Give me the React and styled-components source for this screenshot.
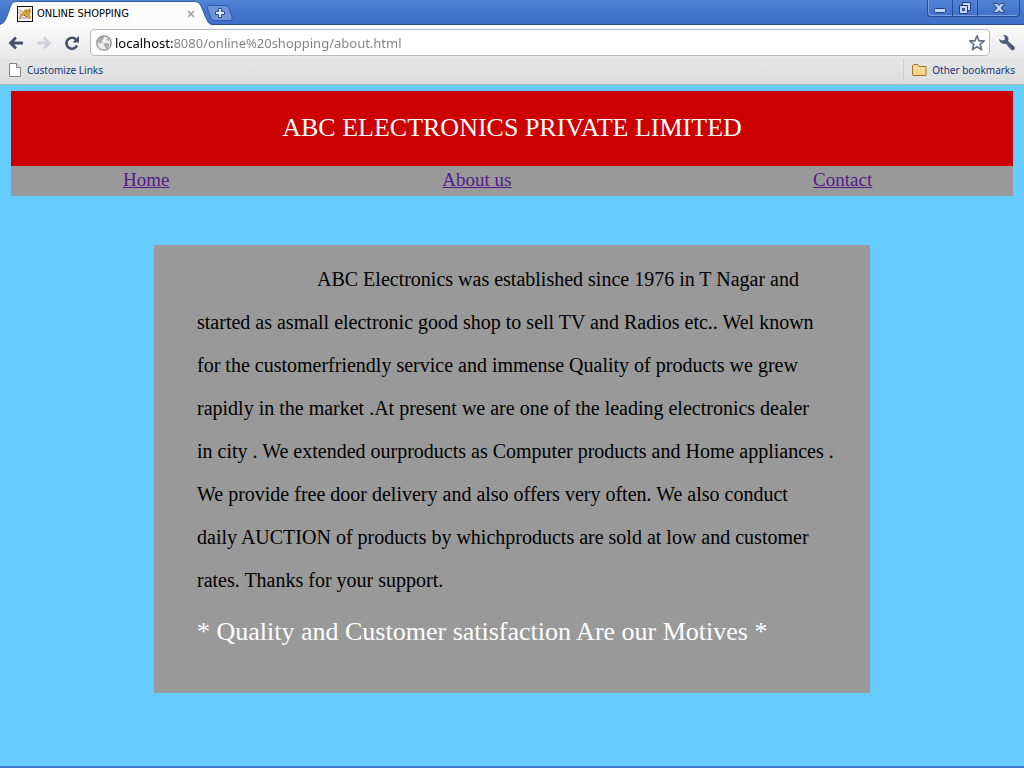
import React from "react";
import styled, { createGlobalStyle } from "styled-components";

const GlobalStyle = createGlobalStyle`
  * { box-sizing: border-box; }
  body { margin: 0; background: #66ccff; }
`;

const ui = `"DejaVu Sans Condensed", "DejaVu Sans", sans-serif`;
const uiText = `"Noto Sans", sans-serif`;

const Window = styled.div`
  min-height: 100vh;
  display: flex;
  flex-direction: column;
  border-bottom: 2px solid #3c78cc;
  background: #66ccff;
`;

const TitleBar = styled.div`
  height: 25px;
  display: flex;
  align-items: stretch;
  background: linear-gradient(#5083d3, #4373cb 60%, #406fc9);
  border-bottom: 1px solid #2e4b8e;
`;

const Tab = styled.div`
  position: relative;
  width: 212px;
  height: 25px;
  padding: 2px 15px 0 17px;
  display: flex;
  align-items: center;
  gap: 4px;
  font: 11px/16px ${ui};
  color: #000;
`;

const TabShape = styled.svg`
  position: absolute;
  left: 0;
  top: 0;
`;

const Favicon = styled.svg`
  position: relative;
  flex: none;
`;

const TabTitle = styled.span`
  position: relative;
  flex: 1;
  white-space: nowrap;
`;

const IconButton = styled.button`
  position: relative;
  flex: none;
  display: flex;
  align-items: center;
  justify-content: center;
  width: ${(p) => p.$w || 28}px;
  height: ${(p) => p.$h || 24}px;
  padding: 0;
  border: 0;
  background: none;
`;

const NewTabShape = styled.svg`
  flex: none;
`;

const Controls = styled.div`
  display: flex;
  height: 17px;
  margin-left: auto;
  margin-right: 4px;
  border: 1px solid #284b93;
  border-top: 0;
  border-radius: 0 0 4px 4px;
  box-shadow: inset 1px -1px 0 #7ba0df;
`;

const ControlButton = styled(IconButton)`
  height: 16px;
  border-left: ${(p) => (p.$divided ? "1px solid #284b93" : "0")};
`;

const Toolbar = styled.div`
  display: flex;
  align-items: center;
  height: 33px;
  padding: 2px 3px 0 2px;
  background: linear-gradient(#fbfafb, #e9e9e9);
`;

const AddressBar = styled.label`
  flex: 1;
  min-width: 0;
  height: 27px;
  margin: 0 3px 0 4px;
  padding: 0 2px 0 5px;
  display: flex;
  align-items: center;
  gap: 3px;
  background: #fff;
  border: 1px solid #b9babd;
  border-radius: 4px;
`;

const AddressInput = styled.input`
  flex: 1;
  min-width: 0;
  padding: 0;
  border: 0;
  outline: 0;
  font: 13px/20px ${uiText};
  color: transparent;
  background: linear-gradient(90deg, #000 58px, #808080 58px);
  background-clip: text;
  -webkit-background-clip: text;
`;

const BookmarksBar = styled.nav`
  display: flex;
  align-items: center;
  justify-content: space-between;
  height: 27px;
  padding: 0 9px 2px 8px;
  background: linear-gradient(#e6e6e6, #dcdcdc);
  border-bottom: 1px solid #b4b5b9;
`;

const Bookmark = styled.a`
  display: flex;
  align-items: center;
  height: 22px;
  gap: 5px;
  padding-left: ${(p) => (p.$divided ? "7px" : "0")};
  border-left: ${(p) => (p.$divided ? "1px solid #c9ced2" : "0")};
  font: 10px/16px ${uiText};
  color: #15347c;
  text-decoration: none;
`;

const Page = styled.div`
  padding: 6px 11px 73px;
  font-family: "Liberation Serif", serif;
`;

const Banner = styled.h1`
  margin: 0;
  padding: 22px 0 23px;
  background: #cc0000;
  color: #fff;
  font-size: 26px;
  line-height: 30px;
  font-weight: 400;
  text-align: center;
`;

const SiteNav = styled.nav`
  display: grid;
  grid-template-columns: 27fr 39fr 34fr;
  padding: 3px 0 5px;
  background: #999;
  font-size: 19px;
  line-height: 22px;
  text-align: center;
`;

const NavLink = styled.a`
  justify-self: center;
  color: #551a8b;
  text-decoration: underline;
`;

const Panel = styled.main`
  max-width: 716px;
  margin: 49px auto 0;
  padding: 13px 30px 40px 43px;
  background: #999;
`;

const Story = styled.p`
  margin: 0;
  text-indent: 120px;
  font-size: 20px;
  line-height: 43px;
  color: #000;
`;

const Motto = styled.p`
  margin: 9px 0 0;
  font-size: 26px;
  line-height: 42px;
  color: #fff;
`;

const CatIcon = () => (
  <Favicon width="16" height="16" viewBox="0 0 16 16" aria-hidden="true">
    <rect x=".5" y=".5" width="15" height="15" fill="#f4f3ed" stroke="#111" />
    <path d="M2 4l4 2 2 2-4 2-2 3M3 12h10M2 6l3 4" fill="none" stroke="#92908a" />
    <path d="M7 5l1-2 2 1 3-2 1 3-1 3 1 5-3-1-2-3-4 1-3 3 1-4 3-3z" fill="#d99b35" />
    <path d="M9 5h1M12 5h1M7 9l3 2" stroke="#5b4222" />
  </Favicon>
);

export default function App() {
  return (
    <Window>
      <GlobalStyle />
      <header>
        <TitleBar>
          <Tab>
            <TabShape width="212" height="25" viewBox="0 0 212 25" aria-hidden="true">
              <path d="M0 25C4 23 5 21 7 16L11 5Q12 1.500 16 1.500H194Q199 1.500 201 6L206 18Q208 24 212 25z" fill="#fcfcfd" />
              <path d="M0 24C4 23 5 21 7 16L11 5Q12 1.500 16 1.500H194Q199 1.500 201 6L206 18Q208 24 212 24.500" fill="none" stroke="#35579e" />
            </TabShape>
            <CatIcon />
            <TabTitle>ONLINE SHOPPING</TabTitle>
            <IconButton $w={12} $h={16} aria-label="Close tab">
              <svg width="8" height="8" viewBox="0 0 8 8"><path d="M1 1l6 6M7 1L1 7" stroke="#a2a2a2" strokeWidth="1.600" /></svg>
            </IconButton>
          </Tab>
          <IconButton $w={16} $h={25} aria-label="New tab">
            <NewTabShape width="28" height="25" viewBox="0 0 28 25">
              <path d="M3 5.500H19Q22 5.500 23 8L26 17Q27 20.500 24 20.500H9Q6 20.500 5 18L1.500 9Q0 5.500 3 5.500z" fill="#6f94d9" stroke="#3159a8" />
              <path d="M12.500 8.500h3v3h3v3h-3v3h-3v-3h-3v-3h3z" fill="#dfe9fa" stroke="#2b4b8a" />
            </NewTabShape>
          </IconButton>
          <Controls>
            <ControlButton $w={24} aria-label="Minimize">
              <svg width="14" height="14" viewBox="0 0 14 14"><rect x="1.500" y="7.500" width="11" height="4" rx="1" fill="#c5d5f2" stroke="#23407c" /></svg>
            </ControlButton>
            <ControlButton $w={25} $divided aria-label="Restore">
              <svg width="14" height="14" viewBox="0 0 14 14" fill="#c5d5f2" stroke="#23407c">
                <path d="M4.500 1.500h8v8h-8z" />
                <path d="M1.500 4.500h8v8h-8z" />
                <path d="M4.500 7.500h2v2h-2z" fill="#4778cd" />
              </svg>
            </ControlButton>
            <ControlButton $w={42} $divided aria-label="Close">
              <svg width="14" height="14" viewBox="0 0 14 14">
                <path d="M2 2.500h3l2 2 2-2h3v1L9 7l3 3.500v1H9l-2-2-2 2H2v-1L5 7 2 3.500z" fill="#c5d5f2" stroke="#23407c" />
              </svg>
            </ControlButton>
          </Controls>
        </TitleBar>
        <Toolbar>
          <IconButton aria-label="Back">
            <svg width="16" height="16" viewBox="0 0 16 16"><path d="M15 8H3M8 2.500L2.500 8 8 13.500" fill="none" stroke="#44516c" strokeWidth="2.800" /></svg>
          </IconButton>
          <IconButton aria-label="Forward">
            <svg width="16" height="16" viewBox="0 0 16 16"><path d="M1 8h12M8 2.500L13.500 8 8 13.500" fill="none" stroke="#cfd2d8" strokeWidth="2.800" /></svg>
          </IconButton>
          <IconButton aria-label="Reload">
            <svg width="16" height="16" viewBox="0 0 16 16">
              <path d="M12 4.500A5.500 5.500 0 1 0 13 10.500" fill="none" stroke="#44516c" strokeWidth="2.700" />
              <path d="M15 1v6.500H8.500z" fill="#44516c" />
            </svg>
          </IconButton>
          <AddressBar>
            <svg width="16" height="16" viewBox="0 0 16 16" aria-hidden="true">
              <circle cx="8" cy="8" r="7.200" fill="#ececec" stroke="#8b8b8b" strokeWidth="1.300" />
              <path d="M2 5q1-3 4-3.500l2 1-1 2-1.500 1 1 2-2.500 1L2.500 8zM8 8.500l3-.5 2.500 1.500q-.5 3-3.500 4.500l-1-2.500-1.500-1.500zM11.500 3l2 2.500-1.500.5-1.500-1.500z" fill="#a9a9a9" />
            </svg>
            <AddressInput aria-label="Address" defaultValue="localhost:8080/online%20shopping/about.html" />
            <IconButton $w={20} aria-label="Bookmark this page" type="button">
              <svg width="18" height="18" viewBox="0 0 18 18">
                <path d="M9 1.800l2 5h5.200l-4.100 3.500 1.500 5.400L9 12.600l-4.600 3.100 1.500-5.400L1.800 6.800H7z" fill="#fff" stroke="#66728a" strokeWidth="1.700" strokeLinejoin="round" />
              </svg>
            </IconButton>
          </AddressBar>
          <IconButton aria-label="Settings">
            <svg width="18" height="18" viewBox="0 0 18 18">
              <path d="M5 1.200Q9 .5 10.500 4L10.200 7.300l6 5.200q1.500 1.700 0 3.200t-3.200 0L8 9.800Q3.500 10.500 1.500 7L1 5l3 1.500L6.500 6l.5-2.500z" fill="#4d5b77" />
            </svg>
          </IconButton>
        </Toolbar>
        <BookmarksBar aria-label="Bookmarks">
          <Bookmark href="#customize">
            <svg width="14" height="16" viewBox="0 0 14 16" aria-hidden="true">
              <path d="M1.500 1.500h7l4 4v9h-11z" fill="#fff" stroke="#828282" />
              <path d="M8.500 1.500v4h4" fill="#eee" stroke="#828282" />
            </svg>
            Customize Links
          </Bookmark>
          <Bookmark href="#other" $divided>
            <svg width="16" height="14" viewBox="0 0 16 14" aria-hidden="true">
              <path d="M1.500 12V2.500l1-1h4l1.500 2h7V12l-1 .5h-12z" fill="#fbd58b" stroke="#a8702c" />
              <path d="M2.500 5h12" stroke="#fff0c8" />
            </svg>
            Other bookmarks
          </Bookmark>
        </BookmarksBar>
      </header>
      <Page>
        <Banner>ABC ELECTRONICS PRIVATE LIMITED</Banner>
        <SiteNav aria-label="Site">
          <NavLink href="#home">Home</NavLink>
          <NavLink href="#about">About us</NavLink>
          <NavLink href="#contact">Contact</NavLink>
        </SiteNav>
        <Panel>
          <Story>
            ABC Electronics was established since 1976 in T Nagar and
            <br />
            started as asmall electronic good shop to sell TV and Radios etc.. Wel known
            <br />
            for the customerfriendly service and immense Quality of products we grew
            <br />
            rapidly in the market .At present we are one of the leading electronics dealer
            <br />
            in city . We extended ourproducts as Computer products and Home appliances .
            <br />
            We provide free door delivery and also offers very often. We also conduct
            <br />
            daily AUCTION of products by whichproducts are sold at low and customer
            <br />
            rates. Thanks for your support.
          </Story>
          <Motto>* Quality and Customer satisfaction Are our Motives *</Motto>
        </Panel>
      </Page>
    </Window>
  );
}
